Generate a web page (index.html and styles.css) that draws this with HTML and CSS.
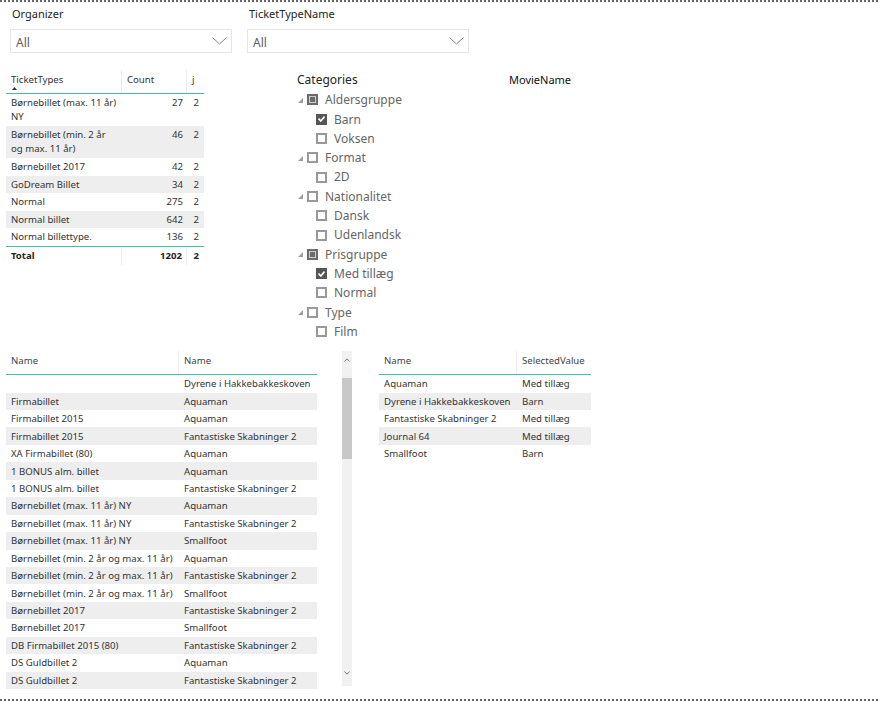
FILE: index.html
```html
<!DOCTYPE html>
<html lang="da">
<head>
<meta charset="utf-8">
<title>Report</title>
<link rel="stylesheet" href="styles.css">
</head>
<body>
<div class="page">
  <div class="dots"></div>

  <div class="top">
    <div class="slicer">
      <div class="slicer-label">Organizer</div>
      <div class="dropdown"><span class="dd-value">All</span><svg class="chev" width="15" height="8" viewBox="0 0 15 8"><polyline points="0.5,0.5 7.5,7 14.5,0.5" fill="none" stroke="#8a8a8a" stroke-width="1"/></svg></div>
    </div>
    <div class="slicer">
      <div class="slicer-label">TicketTypeName</div>
      <div class="dropdown"><span class="dd-value">All</span><svg class="chev" width="15" height="8" viewBox="0 0 15 8"><polyline points="0.5,0.5 7.5,7 14.5,0.5" fill="none" stroke="#8a8a8a" stroke-width="1"/></svg></div>
    </div>
  </div>

  <div class="middle">
    <div class="tt">
      <div class="tt-row tt-head">
        <div class="cell sep">TicketTypes<svg class="sort" width="5" height="3" viewBox="0 0 5 3"><polygon points="0,3 2.5,0 5,3" fill="#333"/></svg></div>
        <div class="cell sep">Count</div>
        <div class="cell">j</div>
      </div>
      <div class="tt-row"><div class="cell">Børnebillet (max. 11 år) NY</div><div class="cell num">27</div><div class="cell num">2</div></div>
      <div class="tt-row alt"><div class="cell">Børnebillet (min. 2 år og max. 11 år)</div><div class="cell num">46</div><div class="cell num">2</div></div>
      <div class="tt-row"><div class="cell">Børnebillet 2017</div><div class="cell num">42</div><div class="cell num">2</div></div>
      <div class="tt-row alt"><div class="cell">GoDream Billet</div><div class="cell num">34</div><div class="cell num">2</div></div>
      <div class="tt-row"><div class="cell">Normal</div><div class="cell num">275</div><div class="cell num">2</div></div>
      <div class="tt-row alt"><div class="cell">Normal billet</div><div class="cell num">642</div><div class="cell num">2</div></div>
      <div class="tt-row"><div class="cell">Normal billettype.</div><div class="cell num">136</div><div class="cell num">2</div></div>
      <div class="tt-row tt-total"><div class="cell sep">Total</div><div class="cell num sep">1202</div><div class="cell num">2</div></div>
    </div>

    <div class="cats">
      <div class="cats-title">Categories</div>
      <div class="node"><span class="tri"></span><span class="cb partial"></span><span>Aldersgruppe</span></div>
      <div class="node child"><span class="cb checked"><svg width="7" height="6" viewBox="0 0 7 6"><polyline points="0.5,2.5 2.8,5 6.5,0.5" fill="none" stroke="#fff" stroke-width="1.6"/></svg></span><span>Barn</span></div>
      <div class="node child"><span class="cb"></span><span>Voksen</span></div>
      <div class="node"><span class="tri"></span><span class="cb"></span><span>Format</span></div>
      <div class="node child"><span class="cb"></span><span>2D</span></div>
      <div class="node"><span class="tri"></span><span class="cb"></span><span>Nationalitet</span></div>
      <div class="node child"><span class="cb"></span><span>Dansk</span></div>
      <div class="node child"><span class="cb"></span><span>Udenlandsk</span></div>
      <div class="node"><span class="tri"></span><span class="cb partial"></span><span>Prisgruppe</span></div>
      <div class="node child"><span class="cb checked"><svg width="7" height="6" viewBox="0 0 7 6"><polyline points="0.5,2.5 2.8,5 6.5,0.5" fill="none" stroke="#fff" stroke-width="1.6"/></svg></span><span>Med tillæg</span></div>
      <div class="node child"><span class="cb"></span><span>Normal</span></div>
      <div class="node"><span class="tri"></span><span class="cb"></span><span>Type</span></div>
      <div class="node child"><span class="cb"></span><span>Film</span></div>
    </div>

    <div class="movie">MovieName</div>
  </div>

  <div class="bottom">
    <div class="bl">
      <div class="bl-row head"><div class="cell sep">Name</div><div class="cell">Name</div></div>
      <div class="bl-row"><div class="cell"></div><div class="cell">Dyrene i Hakkebakkeskoven</div></div>
      <div class="bl-row alt"><div class="cell">Firmabillet</div><div class="cell">Aquaman</div></div>
      <div class="bl-row"><div class="cell">Firmabillet 2015</div><div class="cell">Aquaman</div></div>
      <div class="bl-row alt"><div class="cell">Firmabillet 2015</div><div class="cell">Fantastiske Skabninger 2</div></div>
      <div class="bl-row"><div class="cell">XA Firmabillet (80)</div><div class="cell">Aquaman</div></div>
      <div class="bl-row alt"><div class="cell">1 BONUS alm. billet</div><div class="cell">Aquaman</div></div>
      <div class="bl-row"><div class="cell">1 BONUS alm. billet</div><div class="cell">Fantastiske Skabninger 2</div></div>
      <div class="bl-row alt"><div class="cell">Børnebillet (max. 11 år) NY</div><div class="cell">Aquaman</div></div>
      <div class="bl-row"><div class="cell">Børnebillet (max. 11 år) NY</div><div class="cell">Fantastiske Skabninger 2</div></div>
      <div class="bl-row alt"><div class="cell">Børnebillet (max. 11 år) NY</div><div class="cell">Smallfoot</div></div>
      <div class="bl-row"><div class="cell">Børnebillet (min. 2 år og max. 11 år)</div><div class="cell">Aquaman</div></div>
      <div class="bl-row alt"><div class="cell">Børnebillet (min. 2 år og max. 11 år)</div><div class="cell">Fantastiske Skabninger 2</div></div>
      <div class="bl-row"><div class="cell">Børnebillet (min. 2 år og max. 11 år)</div><div class="cell">Smallfoot</div></div>
      <div class="bl-row alt"><div class="cell">Børnebillet 2017</div><div class="cell">Fantastiske Skabninger 2</div></div>
      <div class="bl-row"><div class="cell">Børnebillet 2017</div><div class="cell">Smallfoot</div></div>
      <div class="bl-row alt"><div class="cell">DB Firmabillet 2015 (80)</div><div class="cell">Fantastiske Skabninger 2</div></div>
      <div class="bl-row"><div class="cell">DS Guldbillet 2</div><div class="cell">Aquaman</div></div>
      <div class="bl-row alt"><div class="cell">DS Guldbillet 2</div><div class="cell">Fantastiske Skabninger 2</div></div>
    </div>

    <div class="scroll">
      <svg class="sc-up" width="6" height="4" viewBox="0 0 6 4"><polyline points="0.5,3.5 3,0.8 5.5,3.5" fill="none" stroke="#777" stroke-width="1"/></svg>
      <div class="thumb"></div>
      <svg class="sc-down" width="6" height="4" viewBox="0 0 6 4"><polyline points="0.5,0.5 3,3.2 5.5,0.5" fill="none" stroke="#777" stroke-width="1"/></svg>
    </div>

    <div class="rt">
      <div class="rt-row head"><div class="cell sep">Name</div><div class="cell">SelectedValue</div></div>
      <div class="rt-row"><div class="cell">Aquaman</div><div class="cell">Med tillæg</div></div>
      <div class="rt-row alt"><div class="cell">Dyrene i Hakkebakkeskoven</div><div class="cell">Barn</div></div>
      <div class="rt-row"><div class="cell">Fantastiske Skabninger 2</div><div class="cell">Med tillæg</div></div>
      <div class="rt-row alt"><div class="cell">Journal 64</div><div class="cell">Med tillæg</div></div>
      <div class="rt-row"><div class="cell">Smallfoot</div><div class="cell">Barn</div></div>
    </div>
  </div>

  <div class="dots dots-bottom"></div>
</div>
</body>
</html>
```

FILE: styles.css
```css
html, body {
  margin: 0;
  padding: 0;
  background: #ffffff;
}

body {
  font-family: "Noto Sans", "Open Sans", "DejaVu Sans", sans-serif;
  color: #333333;
}

.page {
  width: 880px;
  height: 701px;
  display: flex;
  flex-direction: column;
  overflow: hidden;
}

.dots {
  height: 2px;
  flex: none;
  background: repeating-linear-gradient(90deg, #666666 0 2px, transparent 2px 4px);
}

.dots-bottom {
  margin-top: auto;
}

/* ---------- top slicers ---------- */
.top {
  display: flex;
  gap: 15px;
  padding: 4px 0 0 10px;
}

.slicer {
  width: 222px;
}

.slicer-label {
  font-size: 11px;
  line-height: 16px;
  height: 16px;
  padding-left: 2px;
  color: #252423;
}

.dropdown {
  margin-top: 7px;
  height: 24px;
  box-sizing: border-box;
  border: 1px solid #e6e6e6;
  display: flex;
  align-items: center;
  justify-content: space-between;
  padding: 4px 4px 0 5px;
}

.dd-value {
  font-size: 12px;
  line-height: 16px;
  color: #605e5c;
}

.chev {
  display: block;
  margin-top: -5px;
}

/* ---------- middle ---------- */
.middle {
  display: flex;
  margin-top: 17px;
}

.cell {
  box-sizing: border-box;
  padding: 1.5px 5px;
  line-height: 14.4px;
}

.sep {
  border-right: 1px solid #ececec;
}

.num {
  text-align: right;
}

.alt {
  background: #eeeeee;
}

.tt {
  margin-left: 6px;
  width: 198px;
  font-size: 9.6px;
  color: #333333;
}

.tt-row {
  display: grid;
  grid-template-columns: 116px 65px 17px;
}

.tt-row .cell {
  padding-top: 2px;
  padding-bottom: 1.2px;
}

.tt-row .num {
  padding-right: 4px;
}

.tt-row .cell:last-child {
  padding-left: 0;
  padding-right: 5px;
}

.tt-head {
  height: 24px;
  border-bottom: 1px solid #46bcaf;
  box-sizing: border-box;
}

.tt-head .cell {
  padding-top: 3px;
  line-height: 13px;
}

.tt-head .cell:last-child {
  padding-left: 5px;
}

.sort {
  display: block;
  margin: 1px 0 0 1px;
}

.tt-total {
  border-top: 1px solid #46bcaf;
  font-weight: bold;
  color: #252423;
}

.tt-total .cell {
  padding-top: 2px;
  padding-bottom: 2px;
}

/* ---------- categories ---------- */
.cats {
  margin-left: 93px;
  width: 212px;
  font-size: 12px;
  color: #666666;
}

.cats-title {
  line-height: 19.3px;
  height: 20.3px;
  color: #252423;
}

.node {
  height: 19.3px;
  display: flex;
  align-items: center;
  line-height: 19.3px;
}

.node.child {
  padding-left: 19px;
}

.tri {
  width: 0;
  height: 0;
  border-style: solid;
  border-width: 0 0 5px 5px;
  border-color: transparent transparent #a0a0a0 transparent;
  margin: 1px 4px 0 1px;
}

.cb {
  width: 11px;
  height: 11px;
  box-sizing: border-box;
  border: 2px solid #999999;
  background: #ffffff;
  margin-right: 7px;
  display: flex;
  align-items: center;
  justify-content: center;
  flex: none;
}

.cb.partial {
  border-color: #6b6b6b;
  background: #6b6b6b;
  box-shadow: inset 0 0 0 1px #d0d0d0;
}

.cb.checked {
  border-color: #555555;
  background: #555555;
}

.cb svg {
  display: block;
}

.movie {
  font-size: 11px;
  line-height: 19.3px;
  color: #111111;
}

/* ---------- bottom ---------- */
.bottom {
  display: flex;
  margin-top: 10px;
  font-size: 9.6px;
  color: #333333;
}

.bl {
  margin-left: 6px;
  width: 311px;
}

.bl-row {
  display: grid;
  grid-template-columns: 173px 138px;
  height: 17.45px;
  white-space: nowrap;
}

.bl-row .cell,
.rt-row .cell {
  padding-top: 2.2px;
}

.rt {
  margin-left: 27px;
  width: 212px;
}

.rt-row {
  display: grid;
  grid-template-columns: 138px 74px;
  height: 17.45px;
  white-space: nowrap;
}

.bl-row.head,
.rt-row.head {
  height: 24px;
  border-bottom: 1px solid #46bcaf;
  box-sizing: border-box;
  color: #444444;
}

.head .cell {
  padding-top: 3px;
}

.scroll {
  margin-left: 25px;
  width: 10px;
  height: 335px;
  background: #f1f1f1;
  display: flex;
  flex-direction: column;
  align-items: center;
}

.sc-up {
  display: block;
  margin-top: 7px;
}

.thumb {
  margin-top: 16px;
  width: 10px;
  height: 81px;
  background: #c8c8c8;
}

.sc-down {
  display: block;
  margin-top: auto;
  margin-bottom: 11px;
}
```
